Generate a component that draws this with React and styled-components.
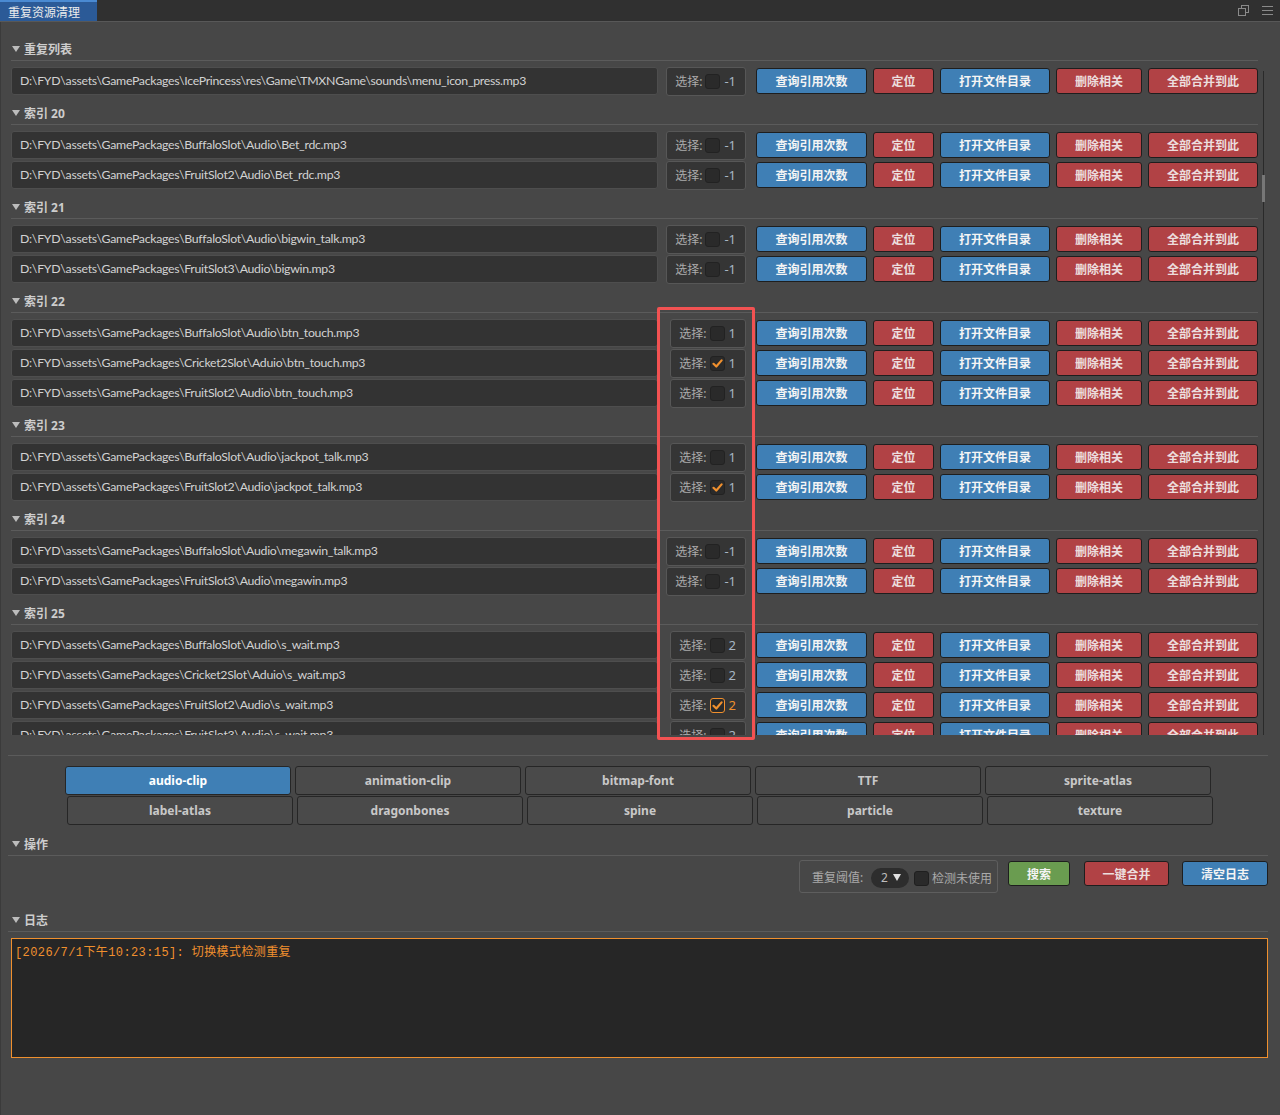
import React from 'react';
import styled, { createGlobalStyle, css } from 'styled-components';

const GlobalStyle = createGlobalStyle`
  html, body {
    margin: 0;
    padding: 0;
    background: #474747;
  }
  body {
    font-family: "Noto Sans", "Noto Sans CJK SC", sans-serif;
    font-size: 12px;
  }
  * {
    box-sizing: border-box;
  }
`;

const CJK = `"Noto Sans", "Noto Sans CJK SC", sans-serif`;

const Window = styled.div`
  position: relative;
  width: 1280px;
  height: 1115px;
  background: #474747;
  box-shadow: inset 1px 0 0 #3b3b3b;
  overflow: hidden;
`;

const TitleBar = styled.div`
  display: flex;
  align-items: stretch;
  height: 22px;
  background: #303030;
  border-bottom: 1px solid #585858;
`;

const TitleTab = styled.div`
  display: flex;
  align-items: center;
  width: 97px;
  padding-left: 8px;
  background: #2b5a97;
  border-top: 2px solid #4a8ad2;
  color: #ececec;
  font-family: ${CJK};
  font-size: 12px;
`;

const TitleIcons = styled.div`
  display: flex;
  align-items: center;
  gap: 13px;
  margin-left: auto;
  padding-right: 7px;
  color: #8a8a8a;
`;

const Body = styled.div`
  padding: 9px 12px 0 8px;
`;

const ListScroll = styled.div`
  display: flex;
  height: 704px;
`;

const ListContent = styled.div`
  flex: 1;
  min-width: 0;
  overflow: hidden;
  padding-left: 3px;
`;

const ScrollTrack = styled.div`
  width: 3px;
  margin: 40px 3px 0 4px;
  background: linear-gradient(to right, transparent 1px, #2a2a2a 1px, #2a2a2a 2px, transparent 2px);
`;

const ScrollThumb = styled.div`
  height: 27px;
  margin-top: 104px;
  background: #777;
`;

const SectionHeader = styled.div`
  display: flex;
  align-items: center;
  gap: 4px;
  height: 23px;
  margin-top: ${(p) => p.$mt}px;
  padding-left: ${(p) => p.$indent}px;
  border-bottom: 1px solid #5b5b5b;
  color: #cdcdcd;
  font-family: ${CJK};
  font-size: 12px;
  font-weight: bold;
`;

const Caret = styled.span`
  width: 0;
  height: 0;
  border-left: 4px solid transparent;
  border-right: 4px solid transparent;
  border-top: 6px solid #bcbcbc;
`;

const Rows = styled.div`
  display: flex;
  flex-direction: column;
  gap: 2px;
  margin-top: 6px;
`;

const Row = styled.div`
  display: flex;
  align-items: center;
  height: 28px;
`;

const PathField = styled.div`
  flex: 1;
  min-width: 0;
  height: 28px;
  padding-left: 8px;
  line-height: 26px;
  background: #333333;
  border: 1px solid #4e4e4e;
  border-radius: 3px;
  color: #d2d2d2;
  font-family: Lato, "Noto Sans", sans-serif;
  font-size: 12.3px;
  letter-spacing: -0.28px;
  white-space: nowrap;
  overflow: hidden;
`;

const SelectCell = styled.div`
  display: flex;
  justify-content: flex-end;
  width: 88px;
  margin-right: 10px;
`;

const SelectBox = styled.div`
  display: flex;
  align-items: center;
  height: 29px;
  padding: 0 9px 0 8px;
  background: #353535;
  border: 1px solid #575757;
  border-radius: 3px;
  color: #ababab;
  font-family: ${CJK};
`;

const CheckBox = styled.span`
  display: flex;
  align-items: center;
  justify-content: center;
  width: 15px;
  height: 15px;
  margin: 0 4px 0 3px;
  background: #2a2a2a;
  border: 1px solid ${(p) => (p.$focus ? '#f0902e' : '#222')};
  border-radius: 3px;
`;

const Count = styled.span`
  color: ${(p) => (p.$focus ? '#f0902e' : '#a7b6c4')};
  font-size: 13px;
`;

const ButtonGroup = styled.div`
  display: flex;
  gap: 6px;
`;

const palette = {
  blue: css`
    background: #3f7fb5;
    color: #f4f4f4;
  `,
  red: css`
    background: #b14245;
    color: #ecdede;
  `,
  green: css`
    background: #6a9c50;
    color: #f4f4f4;
  `,
};

const ActionButton = styled.button`
  display: flex;
  align-items: center;
  justify-content: center;
  width: ${(p) => p.$w}px;
  height: ${(p) => p.$h || 26}px;
  padding: 0;
  border: 1px solid #1e1e1e;
  border-radius: 3px;
  font-family: ${CJK};
  font-size: 12px;
  font-weight: bold;
  cursor: pointer;
  ${(p) => palette[p.$tone]}
`;

const Divider = styled.div`
  height: 1px;
  margin-top: 20px;
  background: #5b5b5b;
`;

const TabGrid = styled.div`
  display: flex;
  flex-direction: column;
  gap: 1px;
  width: 1146px;
  margin: 10px auto 0;
`;

const TabRow = styled.div`
  display: flex;
  gap: 4px;
  margin-left: ${(p) => p.$offset || 0}px;
  margin-right: ${(p) => -(p.$offset || 0)}px;
`;

const TabButton = styled.div`
  display: flex;
  align-items: center;
  justify-content: center;
  flex: 1;
  height: 29px;
  background: ${(p) => (p.$active ? '#3f7fb5' : '#4a4a4a')};
  border: 1px solid #262626;
  border-radius: 3px;
  color: ${(p) => (p.$active ? '#ffffff' : '#c8c8c8')};
  font-size: 12px;
  font-weight: bold;
`;

const OpRow = styled.div`
  display: flex;
  justify-content: flex-end;
  align-items: flex-start;
  margin-top: 4px;
`;

const ThresholdBox = styled.div`
  display: flex;
  align-items: center;
  height: 33px;
  padding: 0 5px 0 12px;
  margin-right: 10px;
  border: 1px solid #5e5e5e;
  border-radius: 3px;
  color: #aaaaaa;
  font-family: ${CJK};
`;

const Pill = styled.span`
  display: flex;
  align-items: center;
  gap: 5px;
  height: 20px;
  margin: 2px 5px 0 8px;
  padding: 0 8px 0 10px;
  background: #2d2d2d;
  border-radius: 10px;
  color: #bdbdbd;
`;

const PillCaret = styled.span`
  width: 0;
  height: 0;
  border-left: 4px solid transparent;
  border-right: 4px solid transparent;
  border-top: 7px solid #e0e0e0;
`;

const SmallCheck = styled.span`
  width: 15px;
  height: 15px;
  margin: 3px 3px 0 0;
  background: #2a2a2a;
  border: 1px solid #1f1f1f;
  border-radius: 3px;
`;

const CheckLabel = styled.span`
  margin-top: 3px;
`;

const OpButtons = styled.div`
  display: flex;
  gap: ${(p) => p.$gap}px;
  margin-left: ${(p) => p.$ml || 0}px;
  margin-top: 1px;
`;

const LogBox = styled.div`
  height: 120px;
  margin: 6px 0 0 3px;
  padding: 3px 3px;
  background: #262626;
  border: 1px solid #f0902e;
  color: #f0902e;
  font-family: "Liberation Mono", "Noto Sans CJK SC", monospace;
  font-size: 12px;
  letter-spacing: 0.4px;
`;

const Highlight = styled.div`
  position: absolute;
  left: 657px;
  top: 307px;
  width: 98px;
  height: 433px;
  border: 3px solid #f25252;
  border-radius: 2px;
  pointer-events: none;
`;

const p = (...parts) => ['D:', 'FYD', 'assets', 'GamePackages', ...parts].join('\\');

const groups = [
  {
    title: '重复列表',
    rows: [{ path: p('IcePrincess', 'res', 'Game', 'TMXNGame', 'sounds', 'menu_icon_press.mp3'), count: '-1' }],
  },
  {
    title: '索引 20',
    rows: [
      { path: p('BuffaloSlot', 'Audio', 'Bet_rdc.mp3'), count: '-1' },
      { path: p('FruitSlot2', 'Audio', 'Bet_rdc.mp3'), count: '-1' },
    ],
  },
  {
    title: '索引 21',
    rows: [
      { path: p('BuffaloSlot', 'Audio', 'bigwin_talk.mp3'), count: '-1' },
      { path: p('FruitSlot3', 'Audio', 'bigwin.mp3'), count: '-1' },
    ],
  },
  {
    title: '索引 22',
    rows: [
      { path: p('BuffaloSlot', 'Audio', 'btn_touch.mp3'), count: '1' },
      { path: p('Cricket2Slot', 'Aduio', 'btn_touch.mp3'), count: '1', checked: true },
      { path: p('FruitSlot2', 'Audio', 'btn_touch.mp3'), count: '1' },
    ],
  },
  {
    title: '索引 23',
    rows: [
      { path: p('BuffaloSlot', 'Audio', 'jackpot_talk.mp3'), count: '1' },
      { path: p('FruitSlot2', 'Audio', 'jackpot_talk.mp3'), count: '1', checked: true },
    ],
  },
  {
    title: '索引 24',
    rows: [
      { path: p('BuffaloSlot', 'Audio', 'megawin_talk.mp3'), count: '-1' },
      { path: p('FruitSlot3', 'Audio', 'megawin.mp3'), count: '-1' },
    ],
  },
  {
    title: '索引 25',
    rows: [
      { path: p('BuffaloSlot', 'Audio', 's_wait.mp3'), count: '2' },
      { path: p('Cricket2Slot', 'Aduio', 's_wait.mp3'), count: '2' },
      { path: p('FruitSlot2', 'Audio', 's_wait.mp3'), count: '2', checked: true, focus: true },
      { path: p('FruitSlot3', 'Audio', 's_wait.mp3'), count: '2' },
    ],
  },
];

const actions = [
  { label: '查询引用次数', tone: 'blue', w: 111 },
  { label: '定位', tone: 'red', w: 61 },
  { label: '打开文件目录', tone: 'blue', w: 110 },
  { label: '删除相关', tone: 'red', w: 86 },
  { label: '全部合并到此', tone: 'red', w: 110 },
];

const tabRows = [
  ['audio-clip', 'animation-clip', 'bitmap-font', 'TTF', 'sprite-atlas'],
  ['label-atlas', 'dragonbones', 'spine', 'particle', 'texture'],
];

const CheckMark = () => (
  <svg width="11" height="11" viewBox="0 0 11 11">
    <path d="M1.5 5.8 L4.3 8.5 L9.6 2.4" fill="none" stroke="#f0902e" strokeWidth="2.2" strokeLinecap="round" strokeLinejoin="round" />
  </svg>
);

const RestoreIcon = () => (
  <svg width="11" height="11" viewBox="0 0 11 11">
    <rect x="3.5" y="0.5" width="7" height="7" fill="none" stroke="currentColor" />
    <rect x="0.5" y="3.5" width="7" height="7" fill="#303030" stroke="currentColor" />
  </svg>
);

const MenuIcon = () => (
  <svg width="11" height="9" viewBox="0 0 11 9">
    <path d="M0 0.5 H11 M0 4.5 H11 M0 8.5 H11" stroke="currentColor" />
  </svg>
);

const Header = ({ title, mt = 7, indent = 1 }) => (
  <SectionHeader $mt={mt} $indent={indent}>
    <Caret />
    {title}
  </SectionHeader>
);

const AssetRow = ({ path, count, checked, focus }) => (
  <Row>
    <PathField>{path}</PathField>
    <SelectCell>
      <SelectBox>
        选择:
        <CheckBox $focus={focus}>{checked && <CheckMark />}</CheckBox>
        <Count $focus={focus}>{count}</Count>
      </SelectBox>
    </SelectCell>
    <ButtonGroup>
      {actions.map((a) => (
        <ActionButton key={a.label} $tone={a.tone} $w={a.w}>
          {a.label}
        </ActionButton>
      ))}
    </ButtonGroup>
  </Row>
);

export default function App() {
  return (
    <>
      <GlobalStyle />
      <Window>
        <TitleBar>
          <TitleTab>重复资源清理</TitleTab>
          <TitleIcons>
            <RestoreIcon />
            <MenuIcon />
          </TitleIcons>
        </TitleBar>
        <Body>
          <ListScroll>
            <ListContent>
              {groups.map((g) => (
                <div key={g.title}>
                  <Header title={g.title} />
                  <Rows>
                    {g.rows.map((r) => (
                      <AssetRow key={r.path} {...r} />
                    ))}
                  </Rows>
                </div>
              ))}
            </ListContent>
            <ScrollTrack>
              <ScrollThumb />
            </ScrollTrack>
          </ListScroll>

          <Divider />

          <TabGrid>
            {tabRows.map((row, i) => (
              <TabRow key={i} $offset={i * 2}>
                {row.map((t) => (
                  <TabButton key={t} $active={t === 'audio-clip'}>
                    {t}
                  </TabButton>
                ))}
              </TabRow>
            ))}
          </TabGrid>

          <Header title="操作" mt={8} indent={4} />
          <OpRow>
            <ThresholdBox>
              重复阈值:
              <Pill>
                2
                <PillCaret />
              </Pill>
              <SmallCheck />
              <CheckLabel>检测未使用</CheckLabel>
            </ThresholdBox>
            <OpButtons $gap={0}>
              <ActionButton $tone="green" $w={62} $h={25}>搜索</ActionButton>
            </OpButtons>
            <OpButtons $gap={13} $ml={14}>
              <ActionButton $tone="red" $w={85} $h={25}>一键合并</ActionButton>
              <ActionButton $tone="blue" $w={86} $h={25}>清空日志</ActionButton>
            </OpButtons>
          </OpRow>

          <Header title="日志" mt={16} indent={4} />
          <LogBox>[2026/7/1下午10:23:15]: 切换模式检测重复</LogBox>
        </Body>
        <Highlight />
      </Window>
    </>
  );
}
